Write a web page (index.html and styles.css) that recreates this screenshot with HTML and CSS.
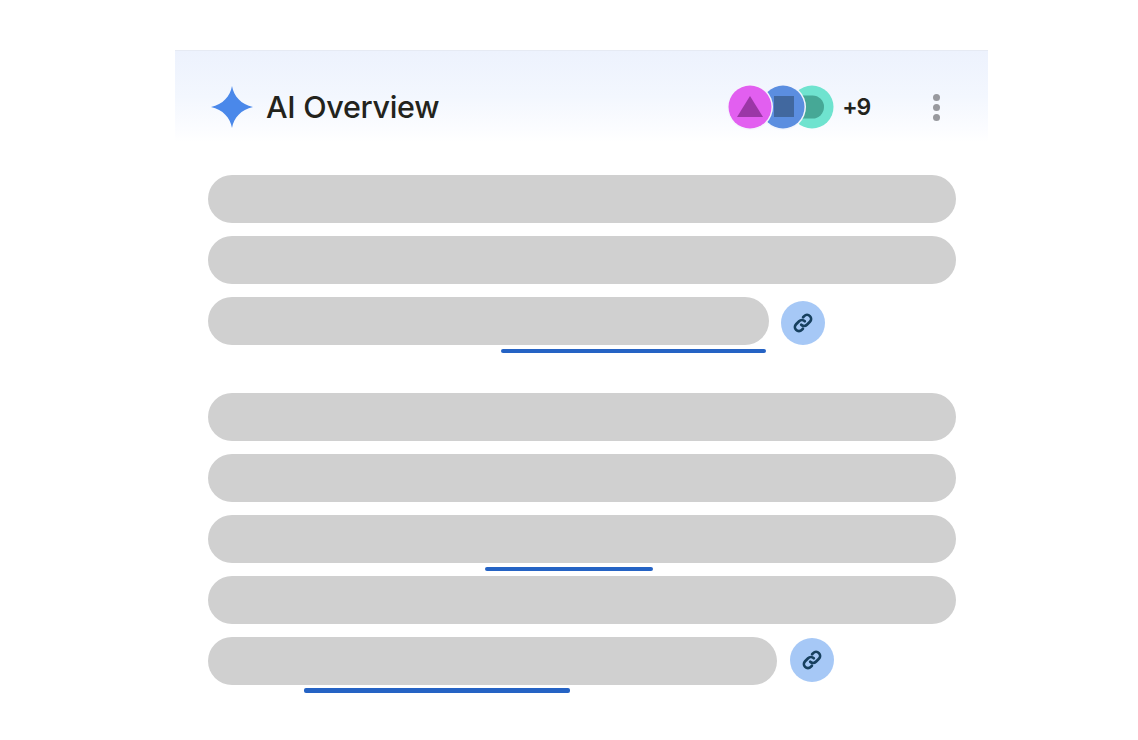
FILE: index.html
```html
<!DOCTYPE html>
<html lang="en">
<head>
<meta charset="utf-8">
<title>AI Overview</title>
<link rel="stylesheet" href="styles.css">
</head>
<body>
<main class="card">
  <header class="head">
    <svg class="spark" viewBox="0 0 42 42" aria-hidden="true"><path d="M21 0C22.800 10 30 18.500 42 21C30 23.500 22.800 32 21 42C19.200 32 12 23.500 0 21C12 18.500 19.200 10 21 0Z"/></svg>
    <h1 class="title">AI Overview</h1>
    <div class="sources">
      <svg class="avatars" viewBox="0 0 106 44" aria-hidden="true">
        <circle cx="84" cy="22" r="21.500" fill="#6fe3cf"/>
        <path d="M73 10.500h11.500a11.500 11.500 0 0 1 0 23H73z" fill="#46a896"/>
        <circle cx="55" cy="22" r="23" fill="#f2f5fd"/>
        <circle cx="55" cy="22" r="21.500" fill="#5b8ee0"/>
        <rect x="46" y="11" width="20" height="21" fill="#41689f"/>
        <circle cx="22" cy="22" r="23" fill="#f4f6fd"/>
        <circle cx="22" cy="22" r="21.500" fill="#e25ff0"/>
        <path d="M22 11L35 32H9z" fill="#9b37a6"/>
      </svg>
      <span class="count">+9</span>
    </div>
    <div class="more" aria-hidden="true"><i></i><i></i><i></i></div>
  </header>
  <section class="para">
    <div class="bar"></div>
    <div class="bar"></div>
    <div class="row">
      <div class="bar short-a"><span class="mark mark-a"></span></div>
      <button class="link link-a" type="button" aria-label="Link"><svg viewBox="0 0 24 24"><path d="M10.200 13.800a4 4 0 0 0 5.700 0l3-3a4 4 0 0 0-5.700-5.700l-1.100 1.100M13.800 10.200a4 4 0 0 0-5.700 0l-3 3a4 4 0 0 0 5.700 5.700l1.100-1.100"/></svg></button>
    </div>
  </section>
  <section class="para">
    <div class="bar"></div>
    <div class="bar"></div>
    <div class="bar"><span class="mark mark-b"></span></div>
    <div class="bar"></div>
    <div class="row">
      <div class="bar short-b"><span class="mark mark-c"></span></div>
      <button class="link link-b" type="button" aria-label="Link"><svg viewBox="0 0 24 24"><path d="M10.200 13.800a4 4 0 0 0 5.700 0l3-3a4 4 0 0 0-5.700-5.700l-1.100 1.100M13.800 10.200a4 4 0 0 0-5.700 0l-3 3a4 4 0 0 0 5.700 5.700l1.100-1.100"/></svg></button>
    </div>
  </section>
</main>
</body>
</html>
```
FILE: styles.css
```css
* { box-sizing: border-box; }
html, body { margin: 0; background: #fff; }
body { height: 740px; overflow: hidden; padding: 50px 0 0 175px; font-family: Inter, "Liberation Sans", sans-serif; }
.card { width: 813px; display: flex; flex-direction: column; }
.head {
  height: 92px; display: flex; align-items: center;
  padding: 21px 48px 0 36px; margin-bottom: 33px;
  background: linear-gradient(#edf2fd 0%, #f3f7fe 50%, #fbfcff 85%, #fff 100%);
  border-top: 1px solid #e6eaf3;
}
.spark { width: 42px; height: 42px; fill: #4a88ea; flex: none; }
.title { margin: 0 0 0 13px; font-size: 30.5px; font-weight: 500; line-height: 36px; color: #23231c; letter-spacing: -0.3px; }
.sources { margin-left: auto; display: flex; align-items: center; }
.avatars { width: 106px; height: 44px; display: block; overflow: visible; }
.count { margin-left: 8px; font-size: 23px; font-weight: 600; color: #23231c; letter-spacing: -1.2px; }
.more { margin-left: 63px; width: 7px; display: flex; flex-direction: column; gap: 3px; }
.more i { display: block; width: 7px; height: 7px; border-radius: 50%; background: #98999e; }
.para { display: flex; flex-direction: column; gap: 13px; padding: 0 32px 0 33px; margin-bottom: 48px; }
.bar { position: relative; height: 48px; border-radius: 24px; background: #d0d0d0; }
.row { display: flex; align-items: center; }
.short-a { width: 561px; margin-right: 12px; }
.short-b { width: 569px; margin-right: 13px; }
.link {
  width: 44px; height: 44px; padding: 0; border: 0; border-radius: 50%;
  background: #a6c8f6; display: flex; align-items: center; justify-content: center;
}
.link-a { margin-top: 4px; }
.link-b { margin-top: -2px; }
.link svg { width: 24px; height: 24px; fill: none; stroke: #17405f; stroke-width: 2.7; stroke-linecap: round; }
.mark { position: absolute; height: 4px; border-radius: 2px; background: #2563c4; top: 52px; }
.mark-a { left: 293px; width: 265px; }
.mark-b { left: 277px; width: 168px; }
.mark-c { left: 96px; width: 266px; top: 51px; height: 5px; }
```
